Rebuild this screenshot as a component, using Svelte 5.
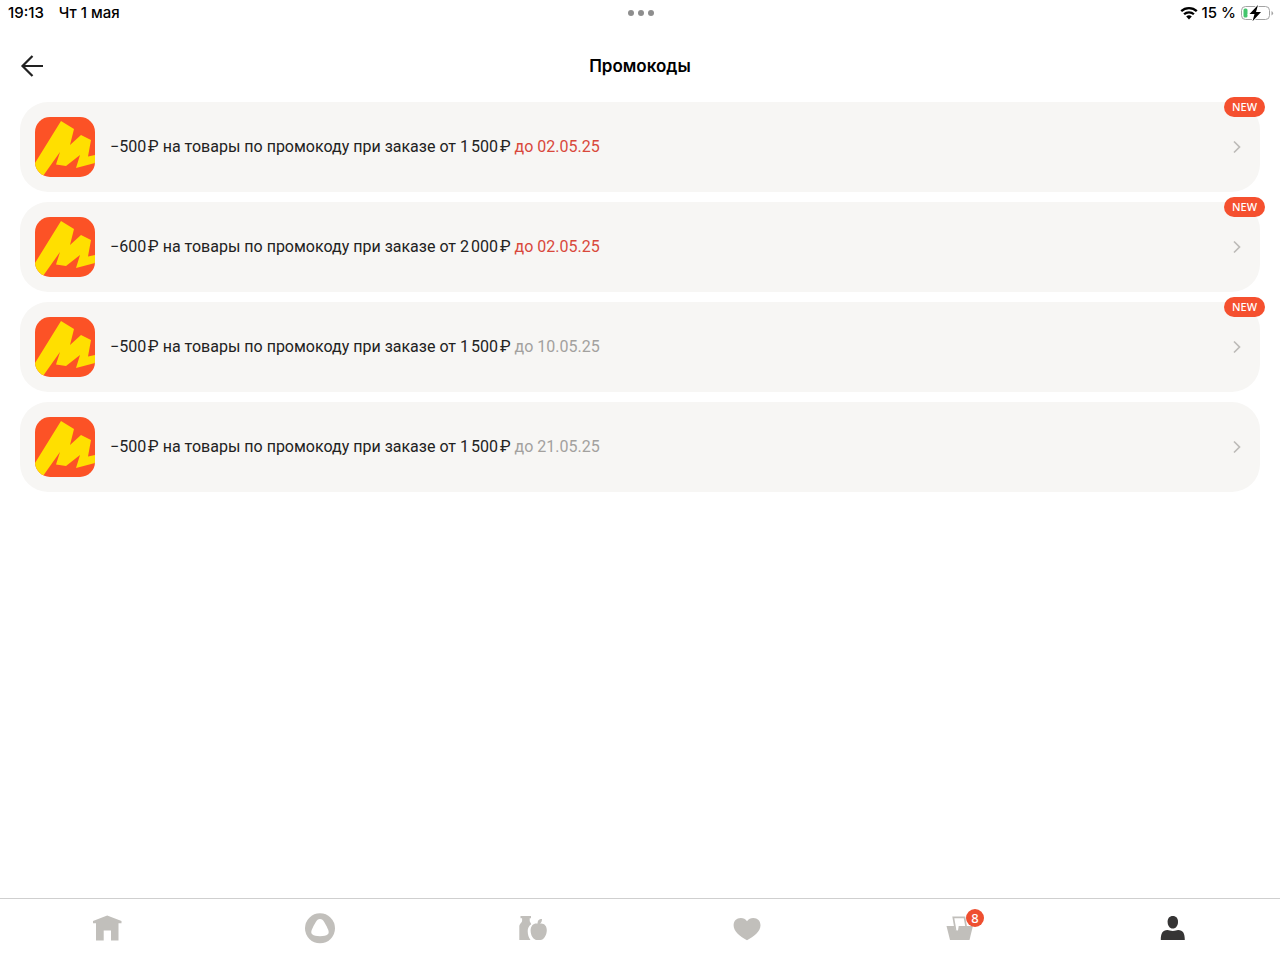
<script>
	let promos = $state([
		{ id: 1, discount: 500, minimum: '1\u202f500', until: '02.05.25', soon: true, fresh: true },
		{ id: 2, discount: 600, minimum: '2\u202f000', until: '02.05.25', soon: true, fresh: true },
		{ id: 3, discount: 500, minimum: '1\u202f500', until: '10.05.25', soon: false, fresh: true },
		{ id: 4, discount: 500, minimum: '1\u202f500', until: '21.05.25', soon: false, fresh: false }
	]);

	const tabs = [
		{ id: 'home', label: 'Главная' },
		{ id: 'alice', label: 'Алиса' },
		{ id: 'food', label: 'Продукты' },
		{ id: 'favorites', label: 'Избранное' },
		{ id: 'cart', label: 'Корзина', count: 8 },
		{ id: 'profile', label: 'Профиль' }
	];

	let active = $state('profile');
</script>

<div class="app">
	<div class="status">
		<div class="status-side">
			<span>19:13</span>
			<span>Чт 1 мая</span>
		</div>
		<div class="dots" aria-hidden="true"><i></i><i></i><i></i></div>
		<div class="status-side right">
			<svg width="18" height="14" viewBox="0 0 18 14" aria-hidden="true">
				<g fill="none" stroke="#000" stroke-width="2.3">
					<path d="M1.2 5.2a11.2 11.2 0 0 1 15.6 0" />
					<path d="M4.1 8.3a7 7 0 0 1 9.8 0" />
				</g>
				<path d="M9 13.4 6.2 10.6a4 4 0 0 1 5.6 0z" />
			</svg>
			<span>15 %</span>
			<svg width="34" height="16" viewBox="0 0 34 16" aria-hidden="true">
				<rect x="1.5" y="1.5" width="28" height="13" rx="4" fill="none" stroke="#a3a3a3" />
				<path d="M31.5 6v4.5q1.6-.7 1.6-2.25T31.5 6" fill="#a3a3a3" />
				<rect x="3.5" y="3.5" width="4" height="9" rx="1.5" fill="#43c56d" />
				<path
					d="M18 0 9.5 9h5l-2 7.3L21 7h-5z"
					stroke="#fff"
					stroke-width="2"
					paint-order="stroke"
				/>
			</svg>
		</div>
	</div>

	<header>
		<button type="button" class="back" aria-label="Назад">
			<svg width="24" height="24" viewBox="0 0 24 24" aria-hidden="true">
				<path d="M12.5 2 2.5 12l10 10M2.5 12H23" fill="none" stroke="#222" stroke-width="2.2" />
			</svg>
		</button>
		<h1>Промокоды</h1>
	</header>

	<main>
		{#each promos as promo (promo.id)}
			<button type="button" class="promo">
				<svg class="logo" width="60" height="60" viewBox="0 0 60 60" aria-hidden="true">
					<rect width="60" height="60" fill="#fc5226" />
					<path
						fill="#ffdf00"
						d="M26 4 39 12 35 28 46 18 56 23 53 39.5 60 38V46L41 51 45 38 31 49 21 47.5 25 35 8 59 0 60V46z"
					/>
				</svg>
				<span class="text">
					−{promo.discount}&#8239;₽ на товары по промокоду при заказе от {promo.minimum}&#8239;₽
					<span class="until" class:soon={promo.soon}>до {promo.until}</span>
				</span>
				<svg class="chevron" width="10" height="14" viewBox="0 0 10 14" aria-hidden="true">
					<path d="m2 1.5 5.5 5.5L2 12.5" fill="none" stroke="#bdbbb8" stroke-width="1.7" />
				</svg>
				{#if promo.fresh}
					<span class="new">NEW</span>
				{/if}
			</button>
		{/each}
	</main>

	<nav>
		{#each tabs as tab (tab.id)}
			<button
				type="button"
				class="tab"
				class:active={active === tab.id}
				aria-label={tab.label}
				onclick={() => (active = tab.id)}
			>
				<span class="tab-icon">
					<svg width="32" height="32" viewBox="0 0 32 32" fill="currentColor" aria-hidden="true">
						{#if tab.id === 'home'}
							<path d="M16.2 3.5 30.5 9v2.2h-3V28.5H20V18.5h-7.3V28.5H5V11.2H2V9z" />
						{:else if tab.id === 'alice'}
							<circle cx="16" cy="16.3" r="15" />
							<path
								fill="#fff"
								d="M16 7c2 0 3 1.2 4.2 3.1 1.6 2.6 3.1 5.2 4.1 7.9 1.4 4-.7 6.2-8.3 6.2S6.3 22 7.7 18c1-2.7 2.5-5.300 4.100-7.900C13 8.200 14 7 16 7"
							/>
						{:else if tab.id === 'food'}
							<path
								d="M3.500 4H14v2.300h-1.300v2.500c0 1.400 1.300 2 1.500 3.400-2.300 1.600-3.500 4-3.500 6.900 0 3.700 1 6.400 2.800 8.900H2.300V14.500c0-3 2.800-3.700 2.800-5.800V6.300H3.500z"
							/>
							<path
								d="M20.600 11.600c0-2.900 1-4.600 4.400-4.600 0 2.200-.6 3.600-2 4.500 4.100-.7 6.800 2.300 6.800 6.500 0 5.500-3.300 10-6.100 10h-4.100c-3.200 0-6-4.500-6-9.400 0-4.900 3-7.600 7-7"
							/>
						{:else if tab.id === 'favorites'}
							<path
								d="M16 9.200C17.700 7 19.600 6 22.300 6c4.300 0 7.200 3 7.200 7.200 0 6.200-6.600 11.200-13.500 15-6.900-3.800-13.400-8.800-13.400-15C2.600 9 5.500 6 9.800 6 12.500 6 14.400 7 16 9.200"
							/>
						{:else if tab.id === 'cart'}
							<path d="M2.500 14h26.400L25.500 28H6z" />
							<path d="M9.500 5.500H21l1.200 8.500h-7.500l-.7 4.500-3-.5z" fill="#fff" />
							<path
								d="m11.500 18-2.200-12.700h11.200l1.600 9"
								fill="none"
								stroke="currentColor"
								stroke-width="1.700"
							/>
						{:else}
							<path
								d="M15.800 4c3.400 0 5.200 2.300 5.200 5.800 0 3.900-2 6.800-5.200 6.800s-5.200-2.900-5.200-6.800C10.600 6.300 12.400 4 15.800 4"
							/>
							<path
								d="M3.800 28c0-6.500 1.700-10 6.700-10 1.700 0 2.500 1 5.300 1s3.600-1 5.300-1c5 0 6.700 3.500 6.700 10z"
							/>
						{/if}
					</svg>
					{#if tab.count}
						<span class="count">{tab.count}</span>
					{/if}
				</span>
			</button>
		{/each}
	</nav>
</div>

<style>
	:global(body) {
		margin: 0;
		background: #fff;
	}

	.app {
		min-height: 100vh;
		display: flex;
		flex-direction: column;
		font-family: Roboto, 'Noto Sans', sans-serif;
		color: #222;
	}

	button {
		border: 0;
		padding: 0;
		background: none;
		color: inherit;
		font: inherit;
		cursor: pointer;
	}

	svg {
		display: block;
		flex: none;
	}

	.status {
		display: grid;
		grid-template-columns: 1fr auto 1fr;
		align-items: center;
		height: 26px;
		padding: 0 6px 0 8px;
		font: 500 15px/26px Inter, sans-serif;
		color: #000;
	}

	.status-side {
		display: flex;
		align-items: center;
		gap: 15px;
	}

	.right {
		justify-content: flex-end;
		gap: 4px;
	}

	.dots {
		display: flex;
		gap: 4px;
	}

	.dots i {
		width: 6px;
		height: 6px;
		border-radius: 50%;
		background: #8e8e8e;
	}

	header {
		display: grid;
		grid-template-columns: 1fr auto 1fr;
		align-items: center;
		padding: 28px 20px 24px;
	}

	.back {
		justify-self: start;
	}

	h1 {
		margin: 0;
		font: 600 17px/24px Inter, sans-serif;
		color: #000;
	}

	main {
		flex: 1;
		display: flex;
		flex-direction: column;
		gap: 10px;
		padding: 0 20px 20px;
	}

	.promo {
		position: relative;
		display: flex;
		align-items: center;
		gap: 15px;
		padding: 15px 18px 15px 15px;
		border-radius: 28px;
		background: #f7f6f4;
		text-align: left;
	}

	.logo {
		border-radius: 15px;
	}

	.text {
		flex: 1;
		font-size: 16px;
		line-height: 22px;
	}

	.until {
		color: #a3a19e;
	}

	.soon {
		color: #d9483b;
	}

	.new {
		position: absolute;
		top: -5px;
		right: -5px;
		padding: 0 8px;
		border-radius: 10px;
		background: #f5502f;
		color: #fff;
		font-family: 'Noto Sans', sans-serif;
		font-size: 11px;
		font-weight: 500;
		line-height: 20px;
	}

	nav {
		display: flex;
		border-top: 1px solid #cfcfcf;
	}

	.tab {
		flex: 1;
		display: flex;
		justify-content: center;
		padding: 13px 0 16px;
		color: #c1bfbb;
	}

	.active {
		color: #363535;
	}

	.tab-icon {
		position: relative;
	}

	.count {
		position: absolute;
		top: -3px;
		right: -8px;
		width: 18px;
		height: 18px;
		border-radius: 50%;
		background: #ee4f30;
		color: #fff;
		font-family: 'Noto Sans', sans-serif;
		font-size: 13px;
		font-weight: 500;
		line-height: 18px;
		text-align: center;
	}
</style>
